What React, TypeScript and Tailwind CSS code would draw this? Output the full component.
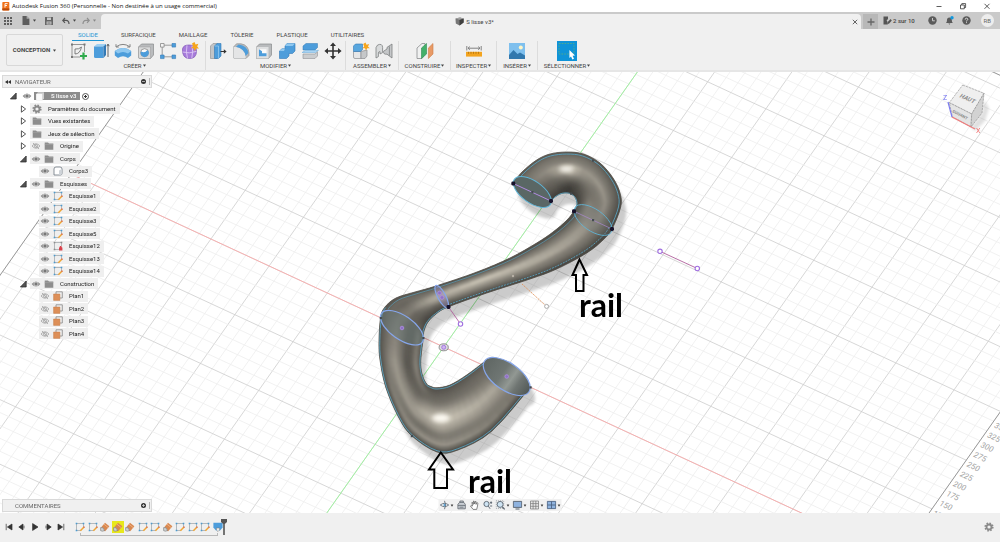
import React from 'react'

type Pt = [number, number]

const toPoints = (pts: Pt[]) => pts.map((p) => p.join(',')).join(' ')

/* ---------- small shared bits ---------- */

function Caret() {
  return (
    <svg viewBox="0 0 4 3" className="w-[3px] h-[3px] shrink-0" aria-hidden="true">
      <path d="M0 0h4L2 3z" fill="#444" />
    </svg>
  )
}

function Eye({ off = false }: { off?: boolean }) {
  return (
    <svg viewBox="0 0 12 10" className="w-3 h-2.5 shrink-0" aria-hidden="true">
      {off ? (
        <g fill="none" stroke="#aaa" strokeWidth="0.9">
          <path d="M2 5Q6 0.5 10 5Q6 9.5 2 5z" />
          <circle cx="6" cy="5" r="1.5" />
          <path d="M3 2l6 6" />
        </g>
      ) : (
        <g>
          <path d="M1.6 5Q6 -0.2 10.4 5Q6 10.2 1.6 5z" fill="#8b8b8b" />
          <circle cx="6" cy="5" r="2" fill="#777" stroke="#e4e4e4" strokeWidth="0.7" />
        </g>
      )}
    </svg>
  )
}

function Gear({ className = 'w-2.5 h-2.5 shrink-0' }: { className?: string }) {
  return (
    <svg viewBox="0 0 10 10" className={className} aria-hidden="true">
      <circle cx="5" cy="5" r="3.8" fill="none" stroke="#8a8a8a" strokeWidth="1.6" strokeDasharray="1.6 1.38" />
      <circle cx="5" cy="5" r="2.5" fill="none" stroke="#8a8a8a" strokeWidth="1.8" />
    </svg>
  )
}

function Folder() {
  return (
    <svg viewBox="0 0 10 10" className="w-2.5 h-2.5 shrink-0" aria-hidden="true">
      <path d="M0.7 1.4H4L5 2.4H9.3V8.8H0.7z" fill="#8d8d8d" />
      <path d="M0.7 3.4H9.3" stroke="#adadad" strokeWidth="0.5" />
    </svg>
  )
}

function SketchIcon({ locked = false }: { locked?: boolean }) {
  return (
    <svg viewBox="0 0 10 10" className="w-2.5 h-2.5 shrink-0" aria-hidden="true">
      <path d="M1.5 1.5H8.5V5M1.5 1.5V8.5H6" fill="none" stroke="#8c9297" strokeWidth="0.6" />
      <g fill={locked ? '#8c8c8c' : '#4c9bd0'}>
        <path d="M0.7 0.7h1.6v1.6H0.7zM7.7 0.7h1.6v1.6H7.7zM0.7 7.7h1.6v1.6H0.7z" />
      </g>
      {locked ? (
        <path d="M6 6.5H6.6C6.6 4.6 8.8 4.6 8.8 6.5H9.4V9.4H6z" fill="#d8414b" />
      ) : (
        <g>
          <path d="M5.4 8.8L8.8 5.2" stroke="#f0a634" strokeWidth="1.5" />
          <path d="M8.6 5.6L9.4 4.6" stroke="#d8633f" strokeWidth="1.5" />
        </g>
      )}
    </svg>
  )
}

function PlaneIcon() {
  return (
    <svg viewBox="0 0 10 10" className="w-2.5 h-2.5 shrink-0" aria-hidden="true">
      <path d="M3 3V0.8H9.3V7H7" fill="none" stroke="#888" strokeWidth="0.8" />
      <path d="M0.6 3H6.9V9.4H0.6z" fill="#dd8f58" stroke="#c47b45" strokeWidth="0.5" />
    </svg>
  )
}

function BodyIcon() {
  return (
    <svg viewBox="0 0 10 10" className="w-2.5 h-2.5 shrink-0" aria-hidden="true">
      <path d="M1 3Q1 1 3 1H7Q9 1 9 3V7.4Q9 9 7.4 9H1z" fill="#fff" stroke="#6d7680" strokeWidth="0.8" />
      <path d="M6 9V4.4L8.8 3V7.4Q8.6 9 7.4 9z" fill="#cfd4d9" />
    </svg>
  )
}

function DocIcon() {
  return (
    <svg viewBox="0 0 10 10" className="w-2.5 h-2.5 shrink-0" aria-hidden="true">
      <path d="M1.2 3L3 1.2H9V7.4L7.4 9.2H1.2z" fill="#d0d0d0" />
      <path d="M1.2 3H7.2V9.2H2.2Q1.2 9.2 1.2 8.2z" fill="#fafafa" />
    </svg>
  )
}

function LoftIcon() {
  return (
    <svg viewBox="0 0 10 10" className="w-2.5 h-2.5 shrink-0" aria-hidden="true">
      <path d="M1 5.4L5 0.8 9.4 4.2 5.2 9.2 1.6 8.2z" fill="#d9884f" />
      <path d="M4 2.2L8.2 5.6" stroke="#f1b88e" strokeWidth="0.8" />
      <path d="M0.6 5.6Q3.4 4.4 4.6 8.6Q2 9.8 0.6 8.6z" fill="#cfd2d4" stroke="#777" strokeWidth="0.6" />
    </svg>
  )
}

/* ---------- ribbon icons, all on an 18 unit board ---------- */

const ribbonIcons: Record<string, React.ReactNode> = {
  'Créer une esquisse': (
    <g>
      <path d="M2 2.5H14.5M2 2.5V15H10M14.5 2.5V10" fill="none" stroke="#8b8b8b" strokeWidth="0.9" />
      <path d="M1 1.5h2v2H1zM13.5 1.5h2v2h-2zM1 14h2v2H1z" fill="#777" />
      <path d="M5 12V7Q9 7.5 11.5 5M5 12Q10 12 11.5 5" fill="none" stroke="#666" strokeWidth="0.8" />
      <path d="M13.5 10.5V17.5M10 14H17" stroke="#2faa4c" strokeWidth="2.2" />
    </g>
  ),
  Extrusion: (
    <g>
      <path d="M2 4.5L5 2H14L11.5 4.5z" fill="#9fd0f2" />
      <path d="M2 4.5H11.5V16H3.5Q2 16 2 14.5z" fill="#4d9ddb" />
      <path d="M11.5 4.5L14 2V13L11.5 16z" fill="#3279b5" />
      <path d="M16 15V3M14.8 4.2L16 2 17.2 4.2" fill="none" stroke="#555" strokeWidth="0.9" />
    </g>
  ),
  Révolution: (
    <g>
      <path d="M0.8 9Q9 3 17.2 9V13.4L14 16Q9 12.4 4 16L0.8 13.4z" fill="#4d9ddb" />
      <path d="M0.8 9Q9 3 17.2 9L14 11.4Q9 8.4 4 11.4z" fill="#8fc8f0" />
      <path d="M2.5 4.6Q9 0.2 15.5 4.6M2 2.2V5H4.8M16 2.2V5H13.2" fill="none" stroke="#777" strokeWidth="0.9" />
    </g>
  ),
  Perçage: (
    <g>
      <path d="M1.5 5L4.5 2H16.5V13L13.5 16.5H3Q1.5 16.5 1.5 15z" fill="#b9bbbd" stroke="#88898b" strokeWidth="0.7" />
      <path d="M1.5 5H13.5V16.5H3Q1.5 16.5 1.5 15z" fill="#d9dadb" stroke="#999" strokeWidth="0.5" />
      <circle cx="7.6" cy="10.7" r="4" fill="#fafafa" stroke="#777" strokeWidth="0.7" />
      <path d="M4 9.4Q8 11.6 10.4 7.9A4 4 0 1 1 4 9.4z" fill="#4d9ddb" />
    </g>
  ),
  Réseau: (
    <g>
      <path d="M5 3.2H13M3.2 5V13M5 14.8H13" fill="none" stroke="#888" strokeWidth="0.8" />
      <path d="M1.5 1.5h3.6v3.6H1.5z" fill="#f3f3f3" stroke="#888" strokeWidth="0.8" />
      <path d="M13 1.5h3.6v3.6H13zM1.5 13h3.6v3.6H1.5zM13 13h3.6v3.6H13z" fill="#4d9ddb" stroke="#3279b5" strokeWidth="0.6" />
    </g>
  ),
  'Créer une forme': (
    <g>
      <path d="M1.5 7Q2 3 8 3Q15.5 3 15.5 9Q15.5 16.5 8.5 16.5Q1 16.5 1.5 7z" fill="#a77bdb" stroke="#7c55b5" strokeWidth="0.7" />
      <path d="M1.6 10Q8 12 15.4 9.4M6 3.4Q4.5 10 6.5 16.3M11 3.6Q12.4 10 10.8 16" fill="none" stroke="#dcc8f5" strokeWidth="0.9" />
      <path d="M13.5 0L14.6 2.5 17.4 1.8 16.2 4.4 18 6.5 15.2 6.4 13.8 9 12.8 6.3 10 6.2 12 4.2 11 1.6z" fill="#f6a51c" />
    </g>
  ),
  'Appuyer/Tirer': (
    <g>
      <path d="M1.5 4L4 1.5H8V16.5H1.5z" fill="#c2c4c6" stroke="#8b8d8f" strokeWidth="0.6" />
      <path d="M5.5 4L8 1.5H12V14L9.5 16.5H5.5z" fill="#4d9ddb" stroke="#3279b5" strokeWidth="0.6" />
      <path d="M5.5 4H9.5V16.5" fill="none" stroke="#9fd0f2" strokeWidth="0.7" />
      <path d="M11.5 9.5H16" stroke="#333" strokeWidth="1" />
      <path d="M14.8 7.2L17.6 9.5 14.8 11.8z" fill="#333" />
    </g>
  ),
  Congé: (
    <g>
      <path d="M1.5 5L4.5 1.8H9Q16.5 3 17 11V13.5L14 16.5H3Q1.5 16.5 1.5 15z" fill="#b9bbbd" stroke="#909294" strokeWidth="0.7" />
      <path d="M1.5 5H4Q12.6 6 13.6 14.6V16.5H3Q1.5 16.5 1.5 15z" fill="#e4e5e6" />
      <path d="M6.6 2.6Q15.4 4 16.4 11L13.6 14Q12.4 6.6 4 4.8z" fill="#4d9ddb" />
    </g>
  ),
  Coque: (
    <g>
      <path d="M1.5 5L4.5 2H16.5V13L13.5 16.5H1.5z" fill="#b9bbbd" stroke="#88898b" strokeWidth="0.7" />
      <path d="M1.5 5H13.5V16.5H1.5z" fill="#dfe0e1" />
      <path d="M4 7.2H11.5V14.2H4z" fill="#fafafa" />
      <path d="M4 14.2V7.2L7 9.2V11.2H11.5V14.2z" fill="#4d9ddb" />
    </g>
  ),
  Combiner: (
    <g>
      <path d="M7 4L9 1.5H17V9L14.5 11.5H11V14L8.5 16.5H1.5V9L4 6.8H7z" fill="#4d9ddb" stroke="#3279b5" strokeWidth="0.6" />
      <path d="M7 4H14.6L17 1.5 9 1.5zM1.5 9L4 6.8H7L6 9z" fill="#8fc8f0" />
    </g>
  ),
  Décaler: (
    <g>
      <path d="M2 4L5 1.5H16.5V5.5L14 8H2z" fill="#4d9ddb" stroke="#3279b5" strokeWidth="0.5" />
      <path d="M1 10.5L4.5 8.4H17.5L14.5 10.5z" fill="#a9d4f3" stroke="#63a8da" strokeWidth="0.5" />
      <path d="M2 12H14L16.5 9.8V14L14 16.5H2z" fill="#cbcdcf" stroke="#8f9193" strokeWidth="0.6" />
    </g>
  ),
  Déplacer: (
    <g fill="#333">
      <path d="M8.2 3H9.8V15H8.2zM3 8.2H15V9.8H3z" />
      <path d="M9 0.4L12 4H6zM9 17.6L6 14H12zM0.4 9L4 6V12zM17.6 9L14 12V6z" />
    </g>
  ),
  'Nouveau composant': (
    <g>
      <path d="M1.5 9.5H9V16.5H3Q1.5 16.5 1.5 15z" fill="#e6e7e8" stroke="#8b8d8f" strokeWidth="0.7" />
      <path d="M9 9.5L15 8V14L13 16.5H9z" fill="#c5c7c9" stroke="#8b8d8f" strokeWidth="0.7" />
      <path d="M1.5 4L3.5 2H10.5V7.5L8.5 9.5H1.5z" fill="#58a6de" stroke="#3279b5" strokeWidth="0.6" />
      <path d="M13.5 0.5L14.5 2.8 17.2 2 16 4.5 17.8 6.3 15.2 6.3 14 8.6 13 6.3 10.4 6.2 12.2 4.4 11.2 2z" fill="#f6a51c" />
    </g>
  ),
  Liaison: (
    <g stroke="#7e8082" strokeWidth="0.8">
      <path d="M1 5.6L2.6 3Q7.4 1 7.6 5.4V10.6L5 12V9.6Q3.4 9.6 3.4 11V14.6L1 16z" fill="#d8dadb" />
      <path d="M17 2L12 5.4V7L8.6 9.2Q8 12.6 12 12.2L17 16z" fill="#c5c7c9" />
      <path d="M14.4 4.4V13.6" />
    </g>
  ),
  Plan: (
    <g>
      <path d="M1 6L6 1.5H9V12L6 16.5H1z" fill="#f0f1f1" stroke="#8b8d8f" strokeWidth="0.8" />
      <path d="M5.5 6L10.5 1.5V12L5.5 16.5z" fill="#43b06a" stroke="#2f8c50" strokeWidth="0.6" />
      <path d="M12.4 6L17 1.5V12L12.4 16.5z" fill="#e89a66" stroke="#cd7c47" strokeWidth="0.6" />
    </g>
  ),
  Mesurer: (
    <g>
      <path d="M1.8 4V8.5M16.2 4V8.5M3 6.2H15M4.8 4.6L3 6.2 4.8 7.8M13.2 4.6L15 6.2 13.2 7.8" fill="none" stroke="#777" strokeWidth="0.9" />
      <path d="M1 9.8H17V14.6H1z" fill="#f3a41f" />
      <path d="M3.5 9.8v2M6 9.8v2M8.5 9.8v2M11 9.8v2M13.5 9.8v2" stroke="#a66a0a" strokeWidth="0.7" />
    </g>
  ),
  Image: (
    <g>
      <path d="M1 1H17V17H1z" fill="#7fc0ee" />
      <circle cx="12.8" cy="5.4" r="2" fill="#fff6c8" />
      <path d="M1 13L5.5 8 9.5 12 12 10.5 17 13.5V17H1z" fill="#3178ae" />
    </g>
  ),
}

const groups = [
  { label: 'CRÉER', box: 'w-[138px] pr-1', icons: ['Créer une esquisse', 'Extrusion', 'Révolution', 'Perçage', 'Réseau', 'Créer une forme'] },
  { label: 'MODIFIER', box: 'w-[140px]', icons: ['Appuyer/Tirer', 'Congé', 'Coque', 'Combiner', 'Décaler', 'Déplacer'] },
  { label: 'ASSEMBLER', box: 'w-[53px] px-[3px]', icons: ['Nouveau composant', 'Liaison'] },
  { label: 'CONSTRUIRE', box: 'w-[52px]', icons: ['Plan'] },
  { label: 'INSPECTER', box: 'w-[46px]', icons: ['Mesurer'] },
  { label: 'INSÉRER', box: 'w-[41px]', icons: ['Image'] },
]

const tabs = ['SOLIDE', 'SURFACIQUE', 'MAILLAGE', 'TÔLERIE', 'PLASTIQUE', 'UTILITAIRES']

/* ---------- top of the window ---------- */

function TitleBar() {
  return (
    <header className="flex h-3 shrink-0 items-center bg-white pl-[2px]">
      <svg viewBox="0 0 8 10" className="w-2 h-2.5" aria-hidden="true">
        <rect x="0.3" y="1" width="7" height="8.4" rx="0.8" fill="#f0711a" />
        <path d="M0.3 7.4H7.3V9.4H0.3z" fill="#b4480a" />
        <path d="M3 6.6V2.6H5.6M3 4.5H5" fill="none" stroke="#fff" strokeWidth="0.9" />
      </svg>
      <h1 className="pl-[2px] font-['Open_Sans',sans-serif] text-[6px] leading-3 text-[#111]">
        Autodesk Fusion 360 (Personnelle - Non destinée à un usage commercial)
      </h1>
      <div className="ml-auto flex gap-4 pr-[9px]">
        <button aria-label="Réduire" className="h-2 w-2">
          <svg viewBox="0 0 8 8"><path d="M1.5 4.5h5" stroke="#333" strokeWidth="0.8" /></svg>
        </button>
        <button aria-label="Restaurer" className="h-2 w-2">
          <svg viewBox="0 0 8 8"><path d="M1.5 3h3.8v3.8H1.5zM2.8 3V1.6h3.8v3.9H5.3" fill="none" stroke="#333" strokeWidth="0.8" /></svg>
        </button>
        <button aria-label="Fermer" className="h-2 w-2">
          <svg viewBox="0 0 8 8"><path d="M1.5 1.8l5 5M6.5 1.8l-5 5" stroke="#333" strokeWidth="0.8" /></svg>
        </button>
      </div>
    </header>
  )
}

function TabStrip() {
  return (
    <div className="flex h-[17px] shrink-0 bg-[#cacaca] pt-[2px]">
      <div className="flex w-[101px] items-center pb-[2px] pl-1">
        <button aria-label="Données" className="w-2">
          <svg viewBox="0 0 8 8"><path d="M0 0h2v2H0zM3 0h2v2H3zM6 0h2v2H6zM0 3h2v2H0zM3 3h2v2H3zM6 3h2v2H6zM0 6h2v2H0zM3 6h2v2H3zM6 6h2v2H6z" fill="#5e5e5e" /></svg>
        </button>
        <button aria-label="Fichier" className="ml-[10px] flex items-center gap-[3px]">
          <svg viewBox="0 0 8 9" className="h-[9px] w-2"><path d="M0.5 0H4.6L7.4 2.8V9H0.5z" fill="#5e5e5e" /><path d="M4.6 0V2.8H7.4" fill="#aaa" /></svg>
          <Caret />
        </button>
        <button aria-label="Enregistrer" className="ml-[9px] w-2">
          <svg viewBox="0 0 8 8"><path d="M0 0h8v8H0z" fill="#666" /><path d="M2 0.6h4v2.4H2zM1.6 4.4h4.8v3H1.6z" fill="#cacaca" /><path d="M2.4 5.4h3.2M2.4 6.5h3.2" stroke="#666" strokeWidth="0.5" /></svg>
        </button>
        <button aria-label="Annuler" className="ml-[9px] flex items-center gap-[3px]">
          <svg viewBox="0 0 8 8" className="h-2 w-2"><path d="M3 1L0.8 3.4 3 5.8M1 3.4H4Q7 3.4 7 7" fill="none" stroke="#555" strokeWidth="1.2" /></svg>
          <Caret />
        </button>
        <button aria-label="Rétablir" className="ml-[6px] flex items-center gap-[3px] opacity-50">
          <svg viewBox="0 0 8 8" className="h-2 w-2"><path d="M5 1L7.2 3.4 5 5.8M7 3.4H4Q1 3.4 1 7" fill="none" stroke="#555" strokeWidth="1.2" /></svg>
          <Caret />
        </button>
      </div>
      <div className="flex flex-1 items-center rounded-t-sm bg-[#f0f0f0]">
        <div className="flex flex-1 items-center justify-center gap-[2px] pr-1 text-[6px] leading-3 text-[#444]">
          <svg viewBox="0 0 9 9" className="h-[9px] w-[9px]" aria-hidden="true">
            <path d="M0.5 1.5L5 0.4 8.6 1.4V5.6L4.6 8.6 0.8 6.6z" fill="#777" />
            <path d="M4.4 2.8L8.6 1.4V5.6L4.6 8.6z" fill="#3f3f3f" />
            <path d="M0.5 1.5L5 0.4 8.6 1.4 4.4 2.8z" fill="#a0a0a0" />
          </svg>
          <span>S lisse v3*</span>
        </div>
        <button aria-label="Fermer l'onglet" className="mr-[3px] h-1.5 w-1.5">
          <svg viewBox="0 0 6 6"><path d="M0.8 0.8l4.4 4.4M5.2 0.8L0.8 5.2" stroke="#555" strokeWidth="0.9" /></svg>
        </button>
      </div>
      <div className="flex w-[139px] items-center pl-[2px]">
        <button aria-label="Nouvel onglet" className="flex h-[15px] w-[15px] items-center justify-center bg-[#b8b8b8]">
          <svg viewBox="0 0 8 8" className="h-2 w-2"><path d="M4 0.5v7M0.5 4h7" stroke="#666" strokeWidth="1.3" /></svg>
        </button>
        <div className="flex items-center pb-[2px]">
          <button className="ml-[5px] flex items-center gap-[1px] text-[6px] font-medium leading-3 text-[#444]">
            <svg viewBox="0 0 9 9" className="h-[9px] w-[9px]" aria-hidden="true">
              <path d="M0.5 0.5H5V3L3.6 4.6 4.6 6V8.5H0.5z" fill="#555" />
              <path d="M4.2 8.2L5 5.8 7.6 3 8.8 4.4 6.2 7.4z" fill="#555" />
            </svg>
            2 sur 10
          </button>
          <button aria-label="État de la tâche" className="ml-[13px] w-[9px]">
            <svg viewBox="0 0 9 9"><circle cx="4.5" cy="4.5" r="4.2" fill="#5b5b5b" /><path d="M4.5 2V4.8H6.8" fill="none" stroke="#cacaca" strokeWidth="1" /></svg>
          </button>
          <button aria-label="Notifications" className="ml-2 w-[9px]">
            <svg viewBox="0 0 9 9"><path d="M1 7Q2 6 2 4Q2 1.4 4.4 1.4Q6.8 1.4 6.8 4Q6.8 6 7.8 7zM3.4 7.6H5.4L4.4 8.8z" fill="#5b5b5b" /><circle cx="7" cy="1.8" r="1.7" fill="#1297dc" /></svg>
          </button>
          <button aria-label="Aide" className="ml-2 w-[9px]">
            <svg viewBox="0 0 9 9"><circle cx="4.5" cy="4.5" r="4.2" fill="#5b5b5b" /><path d="M3.2 3.6Q3.2 2.2 4.5 2.2Q5.8 2.2 5.8 3.4Q5.8 4.2 4.5 4.8V5.4M4.5 6.2V7.1" fill="none" stroke="#e4e4e4" strokeWidth="0.9" /></svg>
          </button>
          <button aria-label="Compte RB" className="ml-2.5 h-[13px] w-[13px] rounded-full bg-[#ededed] text-[6px] leading-[13px] text-[#666]">
            RB
          </button>
        </div>
      </div>
    </div>
  )
}

function Ribbon() {
  return (
    <div className="flex h-[43px] shrink-0 border-b-2 border-[#e6e6e6] bg-[#f0f0f0]">
      <button className="ml-1.5 mt-[5px] flex h-[32px] w-[57px] items-center justify-center gap-[3px] rounded-xs border border-[#d8d8d8] text-[6px] font-bold leading-3 text-[#444]">
        CONCEPTION <Caret />
      </button>
      <div className="flex flex-1 flex-col pl-[5px]">
        <div role="tablist" className="flex h-3 gap-[11px] pl-1">
          {tabs.map((t, i) => (
            <button
              key={t}
              role="tab"
              aria-selected={i === 0}
              className={
                i === 0
                  ? 'border-b border-[#1f96d4] px-[6px] text-[6px] leading-2.5 text-[#1f96d4]'
                  : 'border-b border-transparent px-[6px] text-[6px] leading-2.5 text-[#444]'
              }
            >
              {t}
            </button>
          ))}
        </div>
        <div className="flex">
          {groups.map((g) => (
            <div key={g.label} className={`flex flex-col border-r border-[#dcdcdc] ${g.box}`}>
              <div className="flex h-5 items-center justify-around">
                {g.icons.map((name) => (
                  <button key={name} aria-label={name} className="h-[18px] w-[18px]">
                    <svg viewBox="0 0 18 18">{ribbonIcons[name]}</svg>
                  </button>
                ))}
              </div>
              <button className="flex items-center justify-center gap-[1px] text-[6px] leading-[9px] text-[#444]">
                {g.label} <Caret />
              </button>
            </div>
          ))}
          <div className="flex w-[58px] flex-col">
            <button aria-label="Sélection par fenêtre" className="mx-auto h-5 w-5 bg-[#0f93d8]">
              <svg viewBox="0 0 20 20">
                <path d="M2 2.5H17V13H2z" fill="none" stroke="#5fae7d" strokeWidth="0.8" strokeDasharray="1.6 1.2" />
                <path d="M12.4 9L18 14.6 15.6 14.8 17 17.8 15.4 18.6 14 15.6 12.4 17z" fill="#fff" />
              </svg>
            </button>
            <button className="flex items-center justify-center gap-[1px] text-[6px] leading-[9px] text-[#444]">
              SÉLECTIONNER <Caret />
            </button>
          </div>
        </div>
      </div>
    </div>
  )
}

/* ---------- browser tree ---------- */

type Row = { label: string; icon: React.ReactNode; level: 1 | 2; open?: boolean; eye?: 'on' | 'off' }

const rows: Row[] = [
  { label: 'Paramètres du document', icon: <Gear />, level: 1, open: false },
  { label: 'Vues existantes', icon: <Folder />, level: 1, open: false },
  { label: 'Jeux de sélection', icon: <Folder />, level: 1, open: false },
  { label: 'Origine', icon: <Folder />, level: 1, open: false, eye: 'off' },
  { label: 'Corps', icon: <Folder />, level: 1, open: true, eye: 'on' },
  { label: 'Corps3', icon: <BodyIcon />, level: 2, eye: 'on' },
  { label: 'Esquisses', icon: <Folder />, level: 1, open: true, eye: 'on' },
  { label: 'Esquisse1', icon: <SketchIcon />, level: 2, eye: 'on' },
  { label: 'Esquisse2', icon: <SketchIcon />, level: 2, eye: 'on' },
  { label: 'Esquisse3', icon: <SketchIcon />, level: 2, eye: 'on' },
  { label: 'Esquisse5', icon: <SketchIcon />, level: 2, eye: 'on' },
  { label: 'Esquisse12', icon: <SketchIcon locked />, level: 2, eye: 'on' },
  { label: 'Esquisse13', icon: <SketchIcon />, level: 2, eye: 'on' },
  { label: 'Esquisse14', icon: <SketchIcon />, level: 2, eye: 'on' },
  { label: 'Construction', icon: <Folder />, level: 1, open: true, eye: 'on' },
  { label: 'Plan1', icon: <PlaneIcon />, level: 2, eye: 'off' },
  { label: 'Plan2', icon: <PlaneIcon />, level: 2, eye: 'off' },
  { label: 'Plan3', icon: <PlaneIcon />, level: 2, eye: 'off' },
  { label: 'Plan4', icon: <PlaneIcon />, level: 2, eye: 'off' },
]

function Twisty({ open, label }: { open: boolean; label: string }) {
  return (
    <button aria-label={label} aria-expanded={open} className="mr-[3px] h-2 w-[7px] shrink-0">
      <svg viewBox="0 0 7 8">
        {open ? (
          <path d="M6.2 1V7H0.4z" fill="#555" stroke="#222" strokeWidth="0.7" />
        ) : (
          <path d="M1.4 0.8L5.6 4 1.4 7.2z" fill="#fff" stroke="#444" strokeWidth="0.9" />
        )}
      </svg>
    </button>
  )
}

function BrowserTree() {
  return (
    <ul className="mt-[2px] grid h-[250px] w-[152px] auto-rows-fr text-[6px] text-[#222]">
      <li className="flex items-center pl-2.5">
        <Twisty open label="S lisse v3" />
        <span className="flex w-[14px] justify-center"><Eye /></span>
        <span className="flex h-2 items-center bg-[#8d8d8d] font-medium text-white">
          <span className="flex w-[11px] justify-center"><DocIcon /></span>
          <span className="pl-1.5 pr-1 leading-2">S lisse v3</span>
        </span>
        <input type="radio" name="active" defaultChecked aria-label="Activer S lisse v3" className="ml-[2px] h-[7px] w-[7px] appearance-none rounded-full border border-[#555] bg-white bg-[radial-gradient(circle,#333_35%,transparent_40%)]" />
      </li>
      {rows.map((r) => (
        <li key={r.label} className={r.level === 1 ? 'flex items-center pl-5' : 'flex items-center pl-[39px]'}>
          {r.level === 1 && <Twisty open={!!r.open} label={r.label} />}
          <span className="flex h-[11px] items-center bg-[#efefef]">
            {r.eye && <Eye off={r.eye === 'off'} />}
            <span className="flex w-[13px] justify-center">{r.icon}</span>
            <span className="whitespace-nowrap pl-[5px] pr-1 leading-2.5">{r.label}</span>
          </span>
        </li>
      ))}
    </ul>
  )
}

function PanelBar({ title, sign }: { title: string; sign: '-' | '+' }) {
  return (
    <div className="flex h-[13px] w-[150px] items-center border border-[#d9d9d9] bg-[#f0f0f0] text-[6px] leading-3 text-[#666]">
      <span className="w-3 pl-[2px]">
        {sign === '-' && (
          <svg viewBox="0 0 6 4" className="h-1 w-1.5" aria-hidden="true"><path d="M3 0V4L0 2zM6 0V4L3 2z" fill="#333" /></svg>
        )}
      </span>
      <h2>{title}</h2>
      <button aria-label={sign === '-' ? 'Réduire le panneau' : 'Ajouter un commentaire'} className="ml-auto h-[5px] w-[5px]">
        <svg viewBox="0 0 5 5">
          <circle cx="2.5" cy="2.5" r="2.5" fill="#333" />
          <path d={sign === '-' ? 'M1 2.5h3' : 'M1 2.5h3M2.5 1v3'} stroke="#ddd" strokeWidth="0.7" />
        </svg>
      </button>
      <span className="ml-[3px] mr-px h-[7px] w-px bg-[#b4b4b4]" />
    </div>
  )
}

/* ---------- 3D view ---------- */

// ground plane: one unit is a major grid square (125 mm)
const ground = (u: number, v: number): Pt => [443.7 + 58.2 * u + 34.3 * v, 347 + 27 * u - 48.7 * v]

const range = (from: number, to: number) => Array.from({ length: to - from + 1 }, (_, i) => from + i)

function GroundLine({ a, b, color }: { a: Pt; b: Pt; color: string }) {
  return <line x1={a[0]} y1={a[1]} x2={b[0]} y2={b[1]} stroke={color} strokeWidth="0.8" />
}

function Ground() {
  const left = -6.4
  const right = 7.8
  const top = 8.2
  const bottom = -8
  return (
    <g>
      {range(-32, 39).map((i) => (
        <GroundLine key={`u${i}`} a={ground(i / 5, bottom)} b={ground(i / 5, top)} color={i % 5 === 0 ? '#cdcdcd' : '#eeeeee'} />
      ))}
      {range(-40, 41).map((i) => (
        <GroundLine key={`v${i}`} a={ground(left, i / 5)} b={ground(right, i / 5)} color={i % 5 === 0 ? '#cdcdcd' : '#eeeeee'} />
      ))}
      <GroundLine a={ground(left, bottom)} b={ground(left, top)} color="#808080" />
      <GroundLine a={ground(right, bottom)} b={ground(right, top)} color="#808080" />
      <GroundLine a={ground(left, top)} b={ground(right, top)} color="#808080" />
      <GroundLine a={ground(left, 0)} b={ground(right, 0)} color="#ffa6a6" />
      <GroundLine a={ground(0, bottom)} b={ground(0, top)} color="#93f793" />
      {range(5, 14).map((i) => {
        const [x, y] = ground(right, i / 5)
        return (
          <text key={i} transform={`translate(${x} ${y + 6}) rotate(25)`} className="text-[8px] italic" fill="#a2a2a2">
            {i * 25}
          </text>
        )
      })}
    </g>
  )
}

// matching points on the two sides of the tube, from the hook to the open end
const sections: [Pt, Pt][] = [
  [[513.3, 183.3], [551, 201]],
  [[522, 172], [555, 197]],
  [[536.7, 160], [560, 194]],
  [[550, 154], [564, 193]],
  [[566.7, 152], [568, 193]],
  [[583.3, 154], [571, 194]],
  [[600, 163], [574, 196]],
  [[613, 178], [576, 199]],
  [[620, 193], [577, 203]],
  [[620.7, 207], [576.5, 206]],
  [[612, 229], [574, 211]],
  [[603, 240], [567, 220]],
  [[586.7, 253], [553, 232]],
  [[556.7, 269], [536.7, 243]],
  [[530, 279], [510, 258]],
  [[486.7, 293], [477, 272]],
  [[448, 307], [436, 286]],
  [[436, 314], [415, 292]],
  [[428, 322], [396, 298]],
  [[424, 331], [385, 307]],
  [[423.3, 338], [380.7, 317]],
  [[421, 357], [379, 340]],
  [[421, 368], [380, 360]],
  [[423, 377], [386, 388]],
  [[426.7, 384], [399, 418]],
  [[431, 386.5], [412, 436]],
  [[437, 387.7], [437, 452]],
  [[450, 385], [458, 450]],
  [[466.7, 375], [492, 431]],
  [[484, 362], [530.3, 387.3]],
]

// brightness across the tube at some of the sections
const shading: [number, number[]][] = [
  [0, [85, 108, 122, 120, 108, 98, 92, 84, 66]],
  [2, [88, 115, 132, 146, 130, 110, 98, 80, 62]],
  [3.4, [88, 118, 132, 175, 170, 122, 92, 68, 60]],
  [4.4, [86, 118, 135, 205, 190, 125, 84, 62, 60]],
  [5.4, [84, 114, 132, 158, 150, 116, 84, 72, 60]],
  [7, [80, 106, 128, 158, 128, 118, 104, 84, 64]],
  [9, [72, 92, 116, 148, 128, 128, 140, 108, 70]],
  [11, [66, 88, 112, 130, 154, 158, 136, 106, 70]],
  [13, [64, 90, 118, 138, 182, 168, 134, 110, 72]],
  [15, [64, 92, 118, 146, 176, 212, 156, 114, 74]],
  [16.5, [66, 88, 104, 148, 178, 166, 128, 110, 78]],
  [18, [70, 80, 100, 108, 132, 118, 104, 112, 84]],
  [20, [82, 120, 92, 98, 118, 130, 118, 104, 84]],
  [22, [84, 138, 92, 92, 128, 158, 144, 112, 80]],
  [24, [80, 118, 100, 118, 148, 160, 118, 142, 74]],
  [25.3, [80, 100, 116, 154, 185, 155, 108, 150, 68]],
  [26.3, [80, 100, 118, 175, 215, 168, 122, 152, 66]],
  [27.2, [82, 102, 120, 165, 195, 162, 122, 148, 66]],
  [29, [90, 108, 118, 130, 168, 148, 130, 116, 68]],
]

const mix = (a: number, b: number, t: number) => a + (b - a) * t

function spline(a: number, b: number, c: number, d: number, t: number) {
  return 0.5 * (2 * b + (c - a) * t + (2 * a - 5 * b + 4 * c - d) * t * t + (3 * b - a - 3 * c + d) * t * t * t)
}

function sidePoint(s: number, side: 0 | 1): Pt {
  const last = sections.length - 1
  const i = Math.min(Math.floor(s), last - 1)
  const p = [i - 1, i, i + 1, i + 2].map((k) => sections[Math.max(0, Math.min(last, k))][side])
  const t = s - i
  return [spline(p[0][0], p[1][0], p[2][0], p[3][0], t), spline(p[0][1], p[1][1], p[2][1], p[3][1], t)]
}

function surface(s: number, t: number): Pt {
  const l = sidePoint(s, 0)
  const r = sidePoint(s, 1)
  return [mix(l[0], r[0], t), mix(l[1], r[1], t)]
}

function shade(s: number, t: number) {
  let k = 0
  while (k < shading.length - 2 && shading[k + 1][0] < s) k++
  const [s0, a] = shading[k]
  const [s1, b] = shading[k + 1]
  const f = Math.max(0, Math.min(1, (s - s0) / (s1 - s0)))
  const x = t * 8
  const i = Math.min(7, Math.floor(x))
  const v = mix(mix(a[i], a[i + 1], x - i), mix(b[i], b[i + 1], x - i), f)
  return `rgb(${Math.round(v)},${Math.round(v * 0.97)},${Math.round(v * 0.9)})`
}

const steps = range(0, 29 * 4).map((i) => i / 4)
const curve = (t: number, from = 0, to = 29) => toPoints(steps.filter((s) => s >= from && s <= to).map((s) => surface(s, t)))
const outline = `${curve(0)} ${toPoints([...steps].reverse().map((s) => surface(s, 1)))}`

function Tube() {
  const strips = 20
  return (
    <g>
      <defs>
        <filter id="soft" x="-10%" y="-10%" width="120%" height="120%"><feGaussianBlur stdDeviation="0.9" /></filter>
        <filter id="shadow" x="-10%" y="-10%" width="120%" height="120%"><feGaussianBlur stdDeviation="1.5" /></filter>
        <filter id="glow" x="-60%" y="-60%" width="220%" height="220%"><feGaussianBlur stdDeviation="2" /></filter>
        <clipPath id="tube"><polygon points={outline} /></clipPath>
        <linearGradient id="cap" x1="0" y1="0" x2="1" y2="0">
          <stop offset="0" stopColor="#5f6663" />
          <stop offset="0.4" stopColor="#6f7673" />
          <stop offset="0.6" stopColor="#929893" />
          <stop offset="0.75" stopColor="#6f7572" />
          <stop offset="1" stopColor="#515856" />
        </linearGradient>
      </defs>
      <g transform="translate(5 11)" filter="url(#shadow)" opacity="0.2">
        <polygon points={outline} />
        <ellipse rx="22" ry="10.8" transform="translate(532.3 192) rotate(35)" />
        <ellipse rx="27" ry="13.5" transform="translate(506.7 376.5) rotate(35)" />
      </g>
      <polygon points={outline} fill="#55534c" stroke="#55534c" strokeWidth="0.8" />
      <g clipPath="url(#tube)">
        <g filter="url(#soft)">
          {steps.slice(0, -1).map((s) =>
            range(0, strips - 1).map((j) => {
              const t0 = j / strips
              const t1 = (j + 1) / strips
              const c = shade(s + 0.125, (t0 + t1) / 2)
              return (
                <polygon
                  key={`${s}-${j}`}
                  points={toPoints([surface(s, t0), surface(s + 0.25, t0), surface(s + 0.25, t1), surface(s, t1)])}
                  fill={c}
                  stroke={c}
                  strokeWidth="0.6"
                />
              )
            }),
          )}
        </g>
        <g fill="#fffdf6" filter="url(#glow)">
          <ellipse cx="566" cy="169" rx="7" ry="3" opacity="0.85" />
          <ellipse cx="441" cy="418" rx="9" ry="4" opacity="0.95" />
        </g>
      </g>
      <g fill="none" stroke="#5aa3bf" strokeWidth="0.9">
        <polyline points={curve(0.05, 0, 10)} />
        <polyline points={curve(0.08, 10, 16)} strokeDasharray="2 1" />
        <polyline points={curve(0.02, 16, 29)} />
        <polyline points={curve(1, 0, 10)} />
        <polyline points={curve(0.92, 10, 19)} opacity="0.7" />
        <polyline points={curve(0.98, 19, 29)} />
      </g>
      <ellipse rx="22" ry="10.8" transform="translate(532.3 192) rotate(35)" fill="#5a6765" stroke="#5fb4d6" />
      <ellipse rx="22" ry="10.8" transform="translate(593 220) rotate(35)" fill="#6d7a78" fillOpacity="0.2" stroke="#5fb4d6" strokeWidth="0.8" />
      <ellipse rx="25" ry="11.7" transform="translate(402 327.7) rotate(35)" fill="#6b7c7c" fillOpacity="0.45" stroke="#86a6ea" strokeWidth="1.2" />
      <ellipse rx="12.4" ry="4" transform="translate(441.7 296.5) rotate(62)" fill="#9a8fc4" fillOpacity="0.4" stroke="#86a6ea" strokeWidth="1.2" />
      <ellipse rx="27" ry="13.5" transform="translate(506.7 376.5) rotate(35)" fill="url(#cap)" stroke="#86a6ea" strokeWidth="1.2" />
    </g>
  )
}

const darkNodes: Pt[] = [[513.3, 183.5], [551, 201], [574, 211.3], [612, 229], [448.5, 307]]
const greyNodes: Pt[] = [[532.3, 192], [593, 160.5], [571, 193.5], [593, 220], [380.7, 318], [423.3, 338], [530.5, 387.3], [411.8, 436]]
const ringNodes: Pt[] = [[660, 251.3], [697.3, 268.5], [460.5, 324]]
const centerNodes: Pt[] = [[402, 328], [506.7, 376.5], [439.5, 293], [442, 297.5]]

function Sketches() {
  return (
    <g>
      <g stroke="#b28be0" strokeWidth="1">
        <path d="M513.3 183.5L551 201" />
        <path d="M574 211.3L612 229" opacity="0.6" />
      </g>
      <path d="M660 251.3L697.3 268.5M448.5 307L460.5 324" stroke="#b0609c" strokeWidth="0.9" />
      <path d="M522 284L545 305" stroke="#e0925a" strokeWidth="0.9" strokeDasharray="1.6 0.8" />
      <circle cx="546.6" cy="306.4" r="2" fill="#fff" stroke="#999" strokeWidth="0.8" />
      <circle cx="513" cy="276" r="1.2" fill="#b9b2a6" />
      {ringNodes.map(([x, y]) => (
        <circle key={x} cx={x} cy={y} r="2.2" fill="#fff" stroke="#a06fe0" strokeWidth="1.1" />
      ))}
      {centerNodes.map(([x, y]) => (
        <circle key={x} cx={x} cy={y} r="1.8" fill="#8f72c4" stroke="#a98bdc" strokeWidth="0.9" />
      ))}
      {darkNodes.map(([x, y]) => (
        <rect key={x} x={x - 2} y={y - 2} width="4" height="4" rx="1.4" fill="#17122a" />
      ))}
      {greyNodes.map(([x, y]) => (
        <rect key={`${x}${y}`} x={x - 1} y={y - 1} width="2.2" height="2.2" fill="#444b50" />
      ))}
      <ellipse cx="443.7" cy="347.3" rx="4.6" ry="3.5" fill="#ddd" stroke="#777" strokeWidth="0.8" />
      <circle cx="443.7" cy="347.3" r="2" fill="#cfb8ee" stroke="#a06fe0" strokeWidth="0.9" />
    </g>
  )
}

function ViewCube() {
  return (
    <g>
      <path d="M971 127L982 113 984 100 989 108 985 121 975 131z" fill="#000" opacity="0.12" filter="url(#shadow)" />
      <g stroke="#8a8a8a" strokeWidth="0.6" strokeDasharray="2.4 0.8">
        <path d="M962.7 85L984 93.3 971.7 114 949.3 102.7z" fill="#efefef" />
        <path d="M949.3 102.7L971.7 114 971 127 952.3 116.7z" fill="#e4e4e4" />
        <path d="M984 93.3L971.7 114 971 127 982 113z" fill="#d2d2d2" />
      </g>
      <text transform="translate(959 97) rotate(24) skewX(-16)" className="text-[6px] font-bold" fill="#8a8a8a">HAUT</text>
      <text transform="translate(952 112) rotate(28)" className="text-[4px] font-bold" fill="#8a8a8a">SUIVANT</text>
      <path d="M948 102L952 117" stroke="#7c7cf0" strokeWidth="1.2" />
      <path d="M952 117L975 129" stroke="#f07c7c" strokeWidth="1.2" />
      <text x="943" y="100" className="text-[7px]" fill="#6c6cf0">Z</text>
      <text x="976" y="133" className="text-[7px]" fill="#f06c6c">X</text>
    </g>
  )
}

function Annotations() {
  return (
    <g>
      <g fill="none" stroke="#000" strokeWidth="2">
        <path d="M579.5 259.5L572.5 275H576V291H583.5V275H587z" />
        <path d="M440.8 452.5L429 469.5H434.3V488H447V469.5H453z" />
      </g>
      <g className="font-['Lato',sans-serif] text-[32px] font-bold">
        <text x="579" y="317">rail</text>
        <text x="468" y="493">rail</text>
      </g>
    </g>
  )
}

const navTools: { name: string; caret: boolean; art: React.ReactNode }[] = [
  { name: 'Orbite', caret: true, art: <g><path d="M0.8 5Q5 1.6 9.2 5Q5 8.4 0.8 5zM5 0.8Q7.4 5 5 9.2" fill="none" stroke="#66707a" strokeWidth="0.9" /><path d="M3.6 5h2.8M5 3.6v2.8" stroke="#4c9bd0" strokeWidth="0.8" /></g> },
  { name: 'Regarder', caret: false, art: <path d="M1.4 4.4L3 2.4H7.4L8.8 4.4V8.8H1.4zM1.4 5.4H8.8M3 7.2H7M3.4 2.4V1H6.8V2.4" fill="#c9ced4" stroke="#5f666d" strokeWidth="0.8" /> },
  { name: 'Panoramique', caret: false, art: <path d="M3.6 9.4L1 6Q1.4 5 3 6L2.4 2.4Q3.2 1.8 3.8 4.4L4 1Q5 0.4 5.2 4L6 1.2Q7 1 6.6 4.4L7.8 2.6Q8.8 2.8 8 6L7.2 9.4z" fill="#fff" stroke="#555" strokeWidth="0.7" /> },
  { name: 'Zoom', caret: false, art: <g fill="none" stroke="#59646f" strokeWidth="0.9"><circle cx="4" cy="4" r="2.6" fill="#cfe4f3" /><path d="M5.8 6L7.6 8.8M8.6 1.4V4M7.4 2.6H9.8M7.6 6H9.8" /></g> },
  { name: 'Ajuster', caret: true, art: <g fill="none" stroke="#59646f"><rect x="0.6" y="0.8" width="7.6" height="7.6" strokeWidth="0.5" strokeDasharray="1 1" /><circle cx="4.6" cy="4.4" r="3" strokeWidth="0.9" fill="#cfe4f3" /><path d="M6.8 6.8L9.2 9.4" strokeWidth="1.2" /></g> },
  { name: 'Affichage', caret: true, art: <g><path d="M0.8 1.4H9.2V7.4H0.8z" fill="#8fb3df" stroke="#55606c" strokeWidth="0.9" /><path d="M3 9H7" stroke="#55606c" strokeWidth="1.1" /></g> },
  { name: 'Grille', caret: true, art: <path d="M1 1H9V9H1zM3.6 1V9M6.3 1V9M1 3.6H9M1 6.3H9" fill="#e8e8e8" stroke="#777" strokeWidth="0.7" /> },
  { name: 'Fenêtres', caret: true, art: <path d="M0.8 1.4H9.2V8.6H0.8zM5 1.4V8.6M0.8 5H9.2" fill="#8fb3df" stroke="#4d6485" strokeWidth="0.9" /> },
]

function Viewport() {
  return (
    <main className="relative min-h-0 flex-1 overflow-hidden bg-white">
      <svg viewBox="0 72 1000 441" preserveAspectRatio="xMidYMid slice" className="absolute inset-0 h-full w-full">
        <Ground />
        <Tube />
        <Sketches />
        <ViewCube />
        <Annotations />
      </svg>
      <div className="relative flex h-full flex-col items-start pb-[1px] pl-[2px] pt-[3px]">
        <PanelBar title="NAVIGATEUR" sign="-" />
        <div className="-ml-[2px]"><BrowserTree /></div>
        <div className="mt-auto"><PanelBar title="COMMENTAIRES" sign="+" /></div>
      </div>
      <div className="absolute bottom-[2px] left-1/2 flex h-3 -translate-x-1/2 items-center gap-[3px] bg-[#f1f1f1] px-px">
        {navTools.map((n) => (
          <button key={n.name} aria-label={n.name} className="flex items-center gap-px">
            <svg viewBox="0 0 10 10" className="h-2.5 w-2.5">{n.art}</svg>
            {n.caret && <Caret />}
          </button>
        ))}
      </div>
    </main>
  )
}

/* ---------- timeline ---------- */

const features = ['sketch', 'sketch', 'loft', 'loft-on', 'loft', 'sketch', 'sketch', 'loft', 'sketch', 'sketch', 'sketch', 'form']

const playback = [
  { name: 'Début', d: 'M1.2 0.8V7.2M7 1V7L2.4 4z' },
  { name: 'Précédent', d: 'M5 1V7L0.8 4zM6 2.6V5.4' },
  { name: 'Lecture', d: 'M1.6 0.6V7.4L7 4z' },
  { name: 'Suivant', d: 'M3 1V7L7.2 4zM2 2.6V5.4' },
  { name: 'Fin', d: 'M6.8 0.8V7.2M1 1V7L5.6 4z' },
]

function Timeline() {
  return (
    <footer className="flex h-[29px] shrink-0 items-center bg-[#f0f0f0] pb-[2px] pl-[5px] pr-[6px]">
      <div className="flex gap-[5px]">
        {playback.map((p) => (
          <button key={p.name} aria-label={p.name} className="h-2 w-2">
            <svg viewBox="0 0 8 8"><path d={p.d} fill="#333" stroke="#333" strokeWidth="0.7" /></svg>
          </button>
        ))}
      </div>
      <div className="ml-[9px] mt-[3px] w-[150px]">
        <div className="flex">
          {features.map((f, i) => (
            <button
              key={i}
              aria-label={`Fonction ${i + 1}`}
              className={f === 'loft-on' ? 'flex h-3 flex-1 items-center justify-center bg-[#e8e81c]' : 'flex h-3 flex-1 items-center justify-center'}
            >
              {f === 'sketch' && <SketchIcon />}
              {f.startsWith('loft') && <LoftIcon />}
              {f === 'form' && (
                <svg viewBox="0 0 10 10" className="h-2.5 w-2.5 shrink-0">
                  <path d="M0.4 0.8H9.6V5.4L7 8.4H3L0.4 5.4z" fill="#4d9ddb" />
                  <path d="M3.4 6H6.6V8L5 9.6 3.4 8z" fill="#eee" stroke="#777" strokeWidth="0.5" />
                </svg>
              )}
            </button>
          ))}
        </div>
        <div className="mx-1.5 h-[3px] border-x border-b border-[#b9b9b9]" />
      </div>
      <svg viewBox="0 0 8 18" className="-ml-[4px] h-[18px] w-2" aria-hidden="true">
        <path d="M1 1H7V4L4.8 6V17H3.2V6L1 4z" fill="#555" />
      </svg>
      <button aria-label="Préférences" className="ml-auto h-2.5 w-2.5"><Gear /></button>
    </footer>
  )
}

export default function App() {
  return (
    <div className="flex h-screen flex-col overflow-hidden bg-[#f0f0f0] font-['Roboto','Liberation_Sans',sans-serif]">
      <TitleBar />
      <TabStrip />
      <Ribbon />
      <Viewport />
      <Timeline />
    </div>
  )
}
